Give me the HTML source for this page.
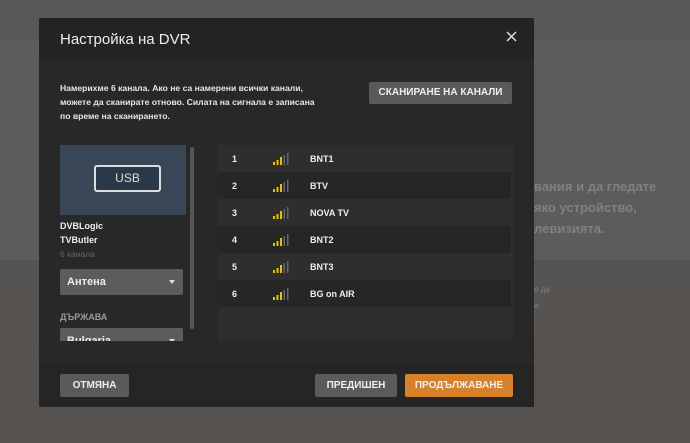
<!DOCTYPE html>
<html><head><meta charset="utf-8"><style>
*{margin:0;padding:0;box-sizing:border-box}
body{width:690px;height:443px;overflow:hidden;position:relative;font-family:"Liberation Sans","DejaVu Sans",sans-serif;background:linear-gradient(#585858,#55514e);}
.bgp{position:absolute;left:0;top:40px;width:690px;height:220px;background:#5c5c5c}
.bgt{position:absolute;color:#808080;font-size:13px;font-weight:bold}
.m{position:absolute;left:39px;top:18px;width:495px;height:389px;background:#282828}
.hd{position:absolute;left:0;top:0;width:495px;height:42px;background:#232323}
.tt{position:absolute;left:21px;top:13px;color:#eee;font-size:15px}
.x{position:absolute;left:467px;top:13px}
.desc{position:absolute;left:21px;top:63px;color:#e6e6e6;font-size:8.6px;line-height:14px;font-weight:bold;width:258px}
.btn{position:absolute;background:#5a5a5a;color:#eee;font-size:10px;font-weight:bold;text-align:center;border-radius:2px}
.card{position:absolute;left:21px;top:127px;width:126px;height:70px;background:#384656}
.usb{position:absolute;left:34px;top:20px;width:67px;height:27px;border:2px solid #ddd;border-radius:3px;background:#2b3848;color:#ddd;font-size:12px;text-align:center;line-height:23px}
.lbl{position:absolute;left:21px;color:#eee;font-size:9px;font-weight:bold}
.sel{position:absolute;left:21px;width:123px;height:26px;background:#5c5c5c;border-radius:2px;color:#eee;font-size:11px;font-weight:bold;padding:7px 7px}
.sel:after{content:"";position:absolute;right:8px;top:11px;border:3px solid transparent;border-top:4px solid #ddd}
.sb{position:absolute;left:151px;top:129px;width:4px;height:182px;background:#555;border-radius:2px}
.list{position:absolute;left:179px;top:127px;width:295px;height:196px;background:#2e2e2e}
.row{position:absolute;left:0;width:293px;height:27px;color:#eee;font-size:9px;font-weight:bold}
.row span{position:absolute;top:9px}
.sig{position:absolute;left:55px;top:8px}
.ft{position:absolute;left:0;top:345px;width:495px;height:44px;background:#252525}
</style></head><body>
<div class="bgp"></div>
<div class="bgt" style="left:534px;top:179px">вания и да гледате</div>
<div class="bgt" style="left:534px;top:200px">яко устройство,</div>
<div class="bgt" style="left:534px;top:221px">левизията.</div>
<div class="bgt" style="left:534px;top:285px;font-size:8px;font-weight:normal">е да</div>
<div class="bgt" style="left:534px;top:301px;font-size:8px;font-weight:normal">и</div>
<div class="m">
<div class="hd"><div class="tt">Настройка на DVR</div><svg class="x" width="11" height="11"><path d="M1 1L10 10M10 1L1 10" stroke="#ddd" stroke-width="1.5"/></svg></div>
<div class="desc">Намерихме 6 канала. Ако не са намерени всички канали, можете да сканирате отново. Силата на сигнала е записана по време на сканирането.</div>
<div class="btn" style="left:330px;top:64px;width:143px;height:22px;line-height:22px">СКАНИРАНЕ НА КАНАЛИ</div>
<div class="card"><div class="usb">USB</div></div>
<div class="lbl" style="top:203px">DVBLogic</div>
<div class="lbl" style="top:217px">TVButler</div>
<div class="lbl" style="top:231px;color:#666;font-weight:normal;font-size:8.5px">6 канала</div>
<div class="sel" style="top:251px">Антена</div>
<div class="lbl" style="top:294px;color:#999">ДЪРЖАВА</div>
<div style="position:absolute;left:0;top:310px;width:160px;height:13px;overflow:hidden"><div class="sel" style="top:0">Bulgaria</div></div>
<div class="sb"></div>
<div class="list">
<div class="row" style="top:0;background:#2e2e2e"><span style="left:14px">1</span><svg class="sig" width="18" height="12"><rect x="0" y="9" width="2" height="3" fill="#e8c20a"/><rect x="3.5" y="7" width="2" height="5" fill="#e8c20a"/><rect x="7" y="4" width="2" height="8" fill="#e8c20a"/><rect x="10.5" y="2" width="1.5" height="10" fill="#666"/><rect x="14" y="0" width="1.5" height="12" fill="#666"/></svg><span style="left:92px">BNT1</span></div>
<div class="row" style="top:27px;background:#262626"><span style="left:14px">2</span><svg class="sig" width="18" height="12"><rect x="0" y="9" width="2" height="3" fill="#e8c20a"/><rect x="3.5" y="7" width="2" height="5" fill="#e8c20a"/><rect x="7" y="4" width="2" height="8" fill="#e8c20a"/><rect x="10.5" y="2" width="1.5" height="10" fill="#666"/><rect x="14" y="0" width="1.5" height="12" fill="#666"/></svg><span style="left:92px">BTV</span></div>
<div class="row" style="top:54px;background:#2e2e2e"><span style="left:14px">3</span><svg class="sig" width="18" height="12"><rect x="0" y="9" width="2" height="3" fill="#e8c20a"/><rect x="3.5" y="7" width="2" height="5" fill="#e8c20a"/><rect x="7" y="4" width="2" height="8" fill="#e8c20a"/><rect x="10.5" y="2" width="1.5" height="10" fill="#666"/><rect x="14" y="0" width="1.5" height="12" fill="#666"/></svg><span style="left:92px">NOVA TV</span></div>
<div class="row" style="top:81px;background:#262626"><span style="left:14px">4</span><svg class="sig" width="18" height="12"><rect x="0" y="9" width="2" height="3" fill="#e8c20a"/><rect x="3.5" y="7" width="2" height="5" fill="#e8c20a"/><rect x="7" y="4" width="2" height="8" fill="#e8c20a"/><rect x="10.5" y="2" width="1.5" height="10" fill="#666"/><rect x="14" y="0" width="1.5" height="12" fill="#666"/></svg><span style="left:92px">BNT2</span></div>
<div class="row" style="top:108px;background:#2e2e2e"><span style="left:14px">5</span><svg class="sig" width="18" height="12"><rect x="0" y="9" width="2" height="3" fill="#e8c20a"/><rect x="3.5" y="7" width="2" height="5" fill="#e8c20a"/><rect x="7" y="4" width="2" height="8" fill="#e8c20a"/><rect x="10.5" y="2" width="1.5" height="10" fill="#666"/><rect x="14" y="0" width="1.5" height="12" fill="#666"/></svg><span style="left:92px">BNT3</span></div>
<div class="row" style="top:135px;background:#262626"><span style="left:14px">6</span><svg class="sig" width="18" height="12"><rect x="0" y="9" width="2" height="3" fill="#e8c20a"/><rect x="3.5" y="7" width="2" height="5" fill="#e8c20a"/><rect x="7" y="4" width="2" height="8" fill="#e8c20a"/><rect x="10.5" y="2" width="1.5" height="10" fill="#666"/><rect x="14" y="0" width="1.5" height="12" fill="#666"/></svg><span style="left:92px">BG on AIR</span></div>
</div>
<div class="ft"></div>
<div class="btn" style="left:21px;top:356px;width:69px;height:23px;line-height:23px">ОТМЯНА</div>
<div class="btn" style="left:276px;top:356px;width:82px;height:23px;line-height:23px">ПРЕДИШЕН</div>
<div class="btn" style="left:366px;top:356px;width:108px;height:23px;line-height:23px;background:#d6812a">ПРОДЪЛЖАВАНЕ</div>
</div>
</body></html>
